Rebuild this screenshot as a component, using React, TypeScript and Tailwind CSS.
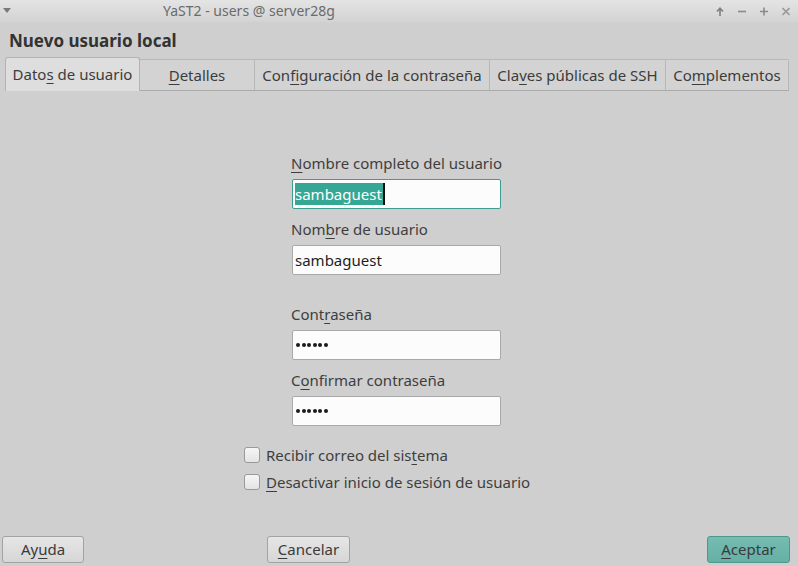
import React from 'react';

const font = { fontFamily: '"Noto Sans", "Open Sans", sans-serif' };

function U({ children }: { children: React.ReactNode }) {
  return <span className="underline underline-offset-[3px] decoration-1">{children}</span>;
}

function Tab({ w, active, children }: { w: string; active?: boolean; children: React.ReactNode }) {
  if (active) {
    return (
      <div className={`${w} h-[34px] -mb-px bg-[#dedede] border border-b-0 border-[#b3b3b3] rounded-t-[3px] flex items-center justify-center text-[15px] text-[#3c3c3c] relative z-10`}>
        {children}
      </div>
    );
  }
  return (
    <div className={`${w} h-[31px] bg-[#d3d3d3] border border-l-0 border-b-0 border-[#b8b8b8] rounded-tr-[2px] flex items-center justify-center text-[15px] text-[#3c3c3c]`}>
      {children}
    </div>
  );
}

function Field({ label, children, focused }: { label: React.ReactNode; children: React.ReactNode; focused?: boolean }) {
  return (
    <div className="flex flex-col">
      <div className="h-[20px] leading-[20px] text-[15px] text-[#3e3e3e] -ml-px">{label}</div>
      <div
        className={`mt-[6px] w-[209px] h-[30px] bg-[#fcfcfc] rounded-[2px] flex items-center pl-[2px] text-[15px] text-[#1e1e1e] border ${
          focused ? 'border-[#3f9d90]' : 'border-[#a9a9a9]'
        }`}
      >
        {children}
      </div>
    </div>
  );
}

function Dots() {
  return (
    <div className="flex gap-[1.5px] pl-[1px]">
      {[0, 1, 2, 3, 4, 5].map((i) => (
        <span key={i} className="w-[4px] h-[4px] rounded-full bg-[#1a1a1a]" />
      ))}
    </div>
  );
}

function Check({ children }: { children: React.ReactNode }) {
  return (
    <div className="flex items-center gap-[6px] h-[20px]">
      <span className="w-[16px] h-[16px] rounded-[3px] border border-[#9a9a9a] bg-gradient-to-b from-[#f6f6f6] to-[#e4e4e4]" />
      <span className="text-[15px] text-[#3e3e3e]">{children}</span>
    </div>
  );
}

function Btn({ children, primary, w }: { children: React.ReactNode; primary?: boolean; w: string }) {
  return (
    <div
      className={`${w} h-[27px] rounded-[3px] border flex items-center justify-center text-[15px] text-[#3a3a3a] ${
        primary
          ? 'bg-gradient-to-b from-[#75bcb1] to-[#66b0a5] border-[#4f968b]'
          : 'bg-gradient-to-b from-[#e6e6e6] to-[#d6d6d6] border-[#a3a3a3]'
      }`}
    >
      {children}
    </div>
  );
}

export default function App() {
  return (
    <div className="w-[798px] h-[566px] bg-[#cfcfcf] flex flex-col overflow-hidden" style={font}>
      {/* title bar */}
      <div className="h-[22px] bg-gradient-to-b from-[#e4e4e4] to-[#d3d3d3] flex items-center relative">
        <svg className="absolute left-[3px] top-[8px]" width="8" height="5" viewBox="0 0 8 5">
          <path d="M0 0H8L4 5Z" fill="#7a7a7a" />
        </svg>
        <div className="pl-[163px] text-[14px] text-[#6b6b6b] leading-none">YaST2 - users @ server28g</div>
        <div className="ml-auto flex items-center gap-[14px] pr-[8px] text-[#8a8a8a]">
          <svg width="8" height="9" viewBox="0 0 8 9">
            <path d="M4 9V1.5M1 4.5L4 1.2L7 4.5" stroke="#7f7f7f" strokeWidth="1.6" fill="none" />
          </svg>
          <svg width="8" height="9" viewBox="0 0 8 9">
            <path d="M0 4.5H8" stroke="#8a8a8a" strokeWidth="1.6" />
          </svg>
          <svg width="8" height="9" viewBox="0 0 8 9">
            <path d="M0 4.5H8M4 0.5V8.5" stroke="#8a8a8a" strokeWidth="1.6" />
          </svg>
          <svg width="8" height="9" viewBox="0 0 8 9">
            <path d="M0.5 1L7.5 8M7.5 1L0.5 8" stroke="#9a9a9a" strokeWidth="1.6" />
          </svg>
        </div>
      </div>

      {/* heading */}
      <div className="pl-[9px] pt-[8px] h-[35px] text-[17px] font-bold text-[#333333] leading-[22px]">Nuevo usuario local</div>

      {/* tabs */}
      <div className="pl-[5px] flex items-end">
        <div className="flex items-end border-b border-[#aaaaaa] w-[784px]">
          <Tab w="w-[135px]" active>
            <span>Dato<U>s</U> de usuario</span>
          </Tab>
          <Tab w="w-[115px]">
            <span><U>D</U>etalles</span>
          </Tab>
          <Tab w="w-[235px]">
            <span>Con<U>f</U>iguración de la contraseña</span>
          </Tab>
          <Tab w="w-[176px]">
            <span>Cla<U>v</U>es públicas de SSH</span>
          </Tab>
          <Tab w="w-[123px]">
            <span>Co<U>m</U>plementos</span>
          </Tab>
        </div>
      </div>

      {/* form */}
      <div className="flex-1 flex flex-col">
        <div className="pl-[292px] pt-[62px] flex flex-col">
          <Field focused label={<span><U>N</U>ombre completo del usuario</span>}>
            <span className="bg-[#35a794] text-white leading-[22px] pr-[1px]">sambaguest</span>
            <span className="w-[2px] h-[22px] bg-[#111]" />
          </Field>
          <div className="h-[10px]" />
          <Field label={<span>Nom<U>b</U>re de usuario</span>}>
            <span>sambaguest</span>
          </Field>
          <div className="h-[29px]" />
          <Field label={<span>Cont<U>r</U>aseña</span>}>
            <Dots />
          </Field>
          <div className="h-[10px]" />
          <Field label={<span>C<U>o</U>nfirmar contraseña</span>}>
            <Dots />
          </Field>
        </div>
        <div className="pl-[244px] pt-[19px] flex flex-col gap-[7px]">
          <Check>Recibir correo del sis<U>t</U>ema</Check>
          <Check><U>D</U>esactivar inicio de sesión de usuario</Check>
        </div>
      </div>

      {/* buttons */}
      <div className="h-[29px] flex items-start pl-[2px] pr-[8px] mb-[1px]">
        <Btn w="w-[82px]">Ay<U>u</U>da</Btn>
        <div className="ml-[183px]">
          <Btn w="w-[83px]"><U>C</U>ancelar</Btn>
        </div>
        <div className="ml-auto">
          <Btn primary w="w-[83px]"><U>A</U>ceptar</Btn>
        </div>
      </div>
    </div>
  );
}
